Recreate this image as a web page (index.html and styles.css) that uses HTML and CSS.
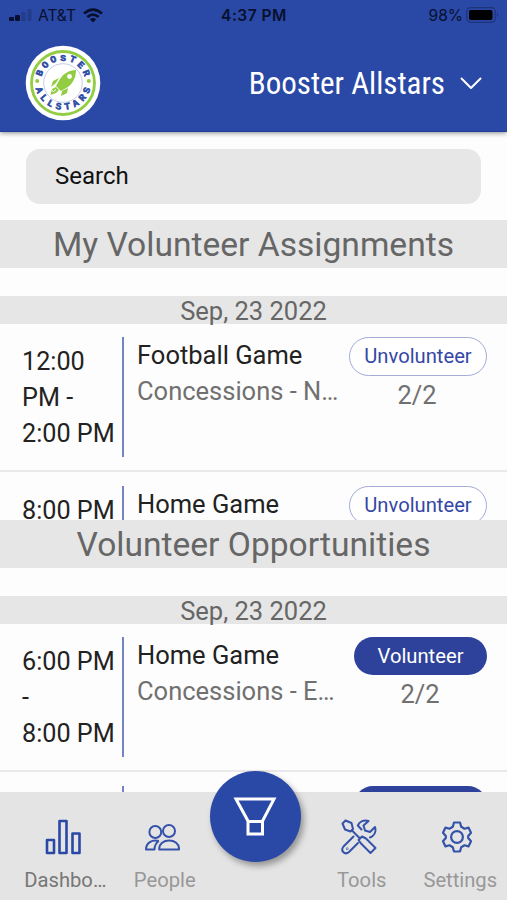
FILE: index.html
```
<!DOCTYPE html>
<html lang="en">
<head>
  <meta charset="utf-8">
  <meta name="viewport" content="width=device-width, initial-scale=1">
  <title>Booster Allstars</title>
  <link rel="stylesheet" href="styles.css">
</head>
<body>
  <header class="header">
    <div class="status-bar">
      <div class="carrier">
        <svg width="24" height="12" viewBox="0 0 24 12">
          <rect x="0" y="8" width="5" height="4" rx="1" fill="#07102e"/>
          <rect x="6" y="6" width="5" height="6" rx="1" fill="#07102e"/>
          <rect x="12.500" y="3" width="4" height="9" rx="1" fill="#233c8b"/>
          <rect x="18.500" y="0" width="4" height="12" rx="1" fill="#233c8b"/>
        </svg>
        <span class="carrier-name">AT&amp;T</span>
        <svg width="20" height="15" viewBox="0 0 20 15" fill="none" stroke="#07102e" stroke-width="2.7">
          <path d="M1 5.6Q10 -2.2 19 5.6"/>
          <path d="M4.3 9.1Q10 4.2 15.700 9.1"/>
          <path d="M10 14.500L6.800 11.300Q10 8.800 13.200 11.300Z" fill="#07102e" stroke="none"/>
        </svg>
      </div>
      <div class="clock">4:37 PM</div>
      <div class="battery">
        <span>98%</span>
        <svg width="33" height="16" viewBox="0 0 33 16">
          <rect x=".7" y=".7" width="28.600" height="14.600" rx="4" fill="none" stroke="#1e347b" stroke-width="1.200"/>
          <rect x="3" y="3" width="23.500" height="10" rx="2" fill="#000"/>
          <path d="M31 5.500Q33 8 31 10.500Z" fill="#1e347b"/>
        </svg>
      </div>
    </div>
    <div class="title-bar">
      <svg class="logo" width="76" height="76" viewBox="0 0 76 76">
        <defs>
          <path id="arc-top" d="M15.500 38A22.500 22.500 0 0 1 60.500 38"/>
          <path id="arc-bottom" d="M9.900 34A28.200 28.200 0 1 0 66.100 34"/>
        </defs>
        <circle cx="38" cy="38" r="37.300" fill="#fff"/>
        <circle cx="38" cy="38" r="31.500" fill="none" stroke="#92cc42" stroke-width="2.800"/>
        <circle cx="38" cy="38" r="19.300" fill="none" stroke="#b9c0df" stroke-width=".8"/>
        <circle cx="12.200" cy="36" r="2" fill="#92cc42"/>
        <circle cx="63.800" cy="36" r="2" fill="#92cc42"/>
        <text class="logo-text" textLength="58"><textPath href="#arc-top" startOffset="50%" text-anchor="middle" textLength="58">BOOSTER</textPath></text>
        <text class="logo-text" textLength="74"><textPath href="#arc-bottom" startOffset="50%" text-anchor="middle" textLength="74">ALLSTARS</textPath></text>
        <g fill="#92cc42">
          <path d="M51 25C44 25 38 29 35 34L31 41L36 46L43 42C48 38 51 32 51 25Z"/>
          <path d="M34 33L28 36L26 42L31 38ZM43 43L42 48L36 51L37 46ZM31 42L27 44L25.500 50L31 48L34 45Z"/>
        </g>
        <circle cx="44.500" cy="31.500" r="2.400" fill="#fff"/>
        <path d="M26.500 45L28.500 46.500L31 44.500" fill="none" stroke="#fff"/>
      </svg>
      <div class="team">
        <span>Booster Allstars</span>
        <svg width="24" height="16" viewBox="0 0 24 16" fill="none" stroke="#fff" stroke-width="2" stroke-linecap="round" stroke-linejoin="round">
          <path d="M2.500 3.500L12 13L21.500 3.500"/>
        </svg>
      </div>
    </div>
  </header>

  <div class="search">Search</div>

  <section class="panel">
    <h1 class="section-title">My Volunteer Assignments</h1>
    <div class="date">Sep, 23 2022</div>
    <div class="shift">
      <div class="time">12:00 PM - 2:00&nbsp;PM</div>
      <div class="event">
        <div class="event-name">Football Game</div>
        <div class="event-job">Concessions - North</div>
      </div>
      <div class="action">
        <button class="btn btn-outline">Unvolunteer</button>
        <div class="count">2/2</div>
      </div>
    </div>
    <div class="shift">
      <div class="time">8:00&nbsp;PM</div>
      <div class="event">
        <div class="event-name">Home Game</div>
      </div>
      <div class="action">
        <button class="btn btn-outline">Unvolunteer</button>
      </div>
    </div>
  </section>

  <section class="panel panel-last">
    <h1 class="section-title">Volunteer Opportunities</h1>
    <div class="date">Sep, 23 2022</div>
    <div class="shift">
      <div class="time">6:00&nbsp;PM - 8:00&nbsp;PM</div>
      <div class="event">
        <div class="event-name">Home Game</div>
        <div class="event-job">Concessions - Entrance</div>
      </div>
      <div class="action">
        <button class="btn btn-solid">Volunteer</button>
        <div class="count">2/2</div>
      </div>
    </div>
    <div class="shift">
      <div class="time"></div>
      <div class="event"></div>
      <div class="action">
        <button class="btn btn-solid"></button>
      </div>
    </div>
  </section>

  <nav class="tabs">
    <div class="tab active">
      <svg width="36" height="36" viewBox="0 0 36 36" fill="none" stroke="#2a48a5" stroke-width="2.600" stroke-linejoin="round">
        <path d="M2 21H9V34H2ZM14.500 2H21.500V34H14.500ZM27.500 14.500H34.500V34H27.500Z"/>
      </svg>
      <span>Dashboard</span>
    </div>
    <div class="tab">
      <svg width="36" height="36" viewBox="0 0 36 36" fill="none" stroke="#3552a9" stroke-width="2" stroke-linejoin="round">
        <circle cx="11.300" cy="13" r="5.900"/>
        <circle cx="25" cy="12" r="6"/>
        <path d="M15.200 30.500C14.500 18.500 35.800 18.500 35 30.500Z"/>
        <path d="M14.800 22C8 20.500 2 23.500 2 30.500H10.500Q10.500 25 14.800 22"/>
      </svg>
      <span>People</span>
    </div>
    <div class="fab">
      <svg width="44" height="40" viewBox="0 0 44 40" fill="none" stroke="#fff" stroke-width="3">
        <path d="M3 2H41L29.500 24V37H15V24Z"/>
        <path d="M15 24.500H29.500"/>
      </svg>
    </div>
    <div class="tab tab-tools">
      <svg width="36" height="36" viewBox="0 0 36 36" fill="none" stroke="#3552a9" stroke-width="2" stroke-linejoin="round" stroke-linecap="round">
        <path d="M1.500 4.500L4.500 1.500L10.500 4L12 10L9.500 12.500L4 10.500Z"/>
        <path d="M11 11.500L19 19.500M17.500 21L21 17.500L25 19.500L34.500 29L29.500 34L20 24.500Z"/>
        <path d="M16.800 6.500C18.500 2.500 23 .500 27.500 2L22.500 6.500L24 11.500L29 13L34 8C35.500 13 33 17 29 18.500M16.800 6.500L20.500 10.500"/>
        <path d="M12.500 17.500L2.500 27.500C-1 32 4 36.500 8 33L17 24"/>
        <circle cx="6.200" cy="29.800" r=".3"/>
      </svg>
      <span>Tools</span>
    </div>
    <div class="tab">
      <svg width="36" height="36" viewBox="0 0 36 36" fill="none" stroke="#3552a9" stroke-width="2.200" stroke-linejoin="round">
        <circle cx="18" cy="18" r="5.900"/>
        <path d="M15 3.500H21L22.200 7.800L25.500 9.700L29.500 8.600L32 13.800L29.200 17V19L32 22.200L29.500 27.400L25.500 26.300L22.200 28.200L21 32.500H15L13.800 28.200L10.500 26.300L6.500 27.400L4 22.200L6.800 19V17L4 13.800L6.500 8.600L10.500 9.700L13.800 7.800Z"/>
      </svg>
      <span>Settings</span>
    </div>
  </nav>
</body>
</html>
```

FILE: styles.css
```
* {
  box-sizing: border-box;
}
body {
  margin: 0;
  height: 900px;
  overflow: hidden;
  display: flex;
  flex-direction: column;
  background: #fdfdfd;
  color: #222;
  font-family: Roboto, "Liberation Sans", sans-serif;
}
svg {
  display: block;
  flex-shrink: 0;
}

/* header */
.header {
  height: 132px;
  flex-shrink: 0;
  background: #2a48a5;
  border-bottom: 1px solid #213f9b;
  box-shadow: 0 1px 5px rgba(0, 0, 0, .45);
}
.status-bar {
  height: 30px;
  padding: 0 8px 0 9px;
  display: grid;
  grid-template-columns: 1fr auto 1fr;
  align-items: center;
  font-family: Inter, sans-serif;
  font-size: 15.5px;
  color: #07102e;
}
.carrier {
  display: flex;
  align-items: center;
}
.carrier-name {
  margin: 0 7px 0 5px;
}
.clock {
  font-weight: 600;
  letter-spacing: .5px;
}
.battery {
  display: flex;
  align-items: center;
  justify-content: flex-end;
  gap: 3px;
}
.title-bar {
  height: 106px;
  padding: 0 24px 0 25px;
  display: flex;
  align-items: center;
  justify-content: space-between;
}
.logo-text {
  font: bold 9.5px "Liberation Mono", monospace;
  fill: #2a48a5;
  stroke: #2a48a5;
  stroke-width: .6;
}
.team {
  display: flex;
  align-items: center;
  gap: 14px;
  color: #fff;
  font-family: "Roboto Condensed", Roboto, sans-serif;
  font-stretch: condensed;
  font-size: 31px;
}

.search {
  height: 55px;
  margin: 16.5px 26px 16.5px;
  padding: 0 29px;
  flex-shrink: 0;
  border-radius: 14px;
  background: #e7e7e7;
  color: #111;
  font-size: 24px;
  line-height: 55px;
}

/* lists */
.panel {
  height: 300px;
  flex-shrink: 0;
  overflow: hidden;
}
.panel-last {
  height: 272px;
}
.section-title {
  margin: 0 0 28px;
  height: 48px;
  background: #e6e6e6;
  color: #666;
  font-size: 33.6px;
  font-weight: 400;
  line-height: 49px;
  text-align: center;
}
.date {
  height: 28px;
  background: #e6e6e6;
  color: #666;
  font-size: 25.5px;
  line-height: 30px;
  text-align: center;
}
.shift {
  height: 148px;
  padding: 13px 20px 13px 22px;
  display: flex;
  border-bottom: 2px solid #e9e9e9;
}
.shift + .shift {
  padding-top: 14px;
}
.time {
  width: 102px;
  height: 120px;
  padding: 7px 0;
  border-right: 2px solid #7583c4;
  font-size: 25.2px;
  line-height: 36px;
}
.event {
  width: 204px;
  margin-left: 13px;
  font-size: 25.5px;
  line-height: 36px;
}
.event-job {
  color: #707070;
  overflow: hidden;
  white-space: nowrap;
  text-overflow: ellipsis;
}
.action {
  flex: 1;
  display: flex;
  flex-direction: column;
  align-items: flex-end;
}
.btn {
  border: 0;
  border-radius: 20px;
  padding: 0;
  font-family: inherit;
  font-size: 20.2px;
}
.btn-outline {
  width: 138px;
  height: 39px;
  padding-bottom: 2px;
  border: 1px solid #a3abd6;
  background: #fff;
  color: #3548a5;
}
.btn-solid {
  width: 133px;
  height: 38px;
  padding-bottom: 1px;
  background: #2e429c;
  color: #fff;
}
.count {
  width: 140px;
  color: #707070;
  font-size: 25.5px;
  line-height: 38px;
  text-align: center;
}
.btn-solid + .count {
  width: 134px;
}

/* bottom tabs */
.tabs {
  position: relative;
  height: 108px;
  padding-left: 17px;
  flex-shrink: 0;
  display: flex;
  background: #e4e4e4;
  color: #989898;
  font-size: 20.2px;
}
.tab {
  width: 98.5px;
  padding-top: 27px;
  flex-shrink: 0;
  display: flex;
  flex-direction: column;
  align-items: center;
  gap: 13px;
}
.tab svg {
  margin-right: 6px;
}
.tab span {
  max-width: 84px;
  overflow: hidden;
  white-space: nowrap;
  text-overflow: ellipsis;
}
.tab.active {
  color: #777;
}
/* leaves room for the round button in the middle */
.tab-tools {
  margin-left: 98.5px;
}
.fab {
  position: absolute;
  left: 209.5px;
  top: -21px;
  width: 91px;
  height: 91px;
  border-radius: 50%;
  display: flex;
  align-items: center;
  justify-content: center;
  background: #2a48a5;
  box-shadow: 3px 4px 6px rgba(0, 0, 0, .35);
}
```
